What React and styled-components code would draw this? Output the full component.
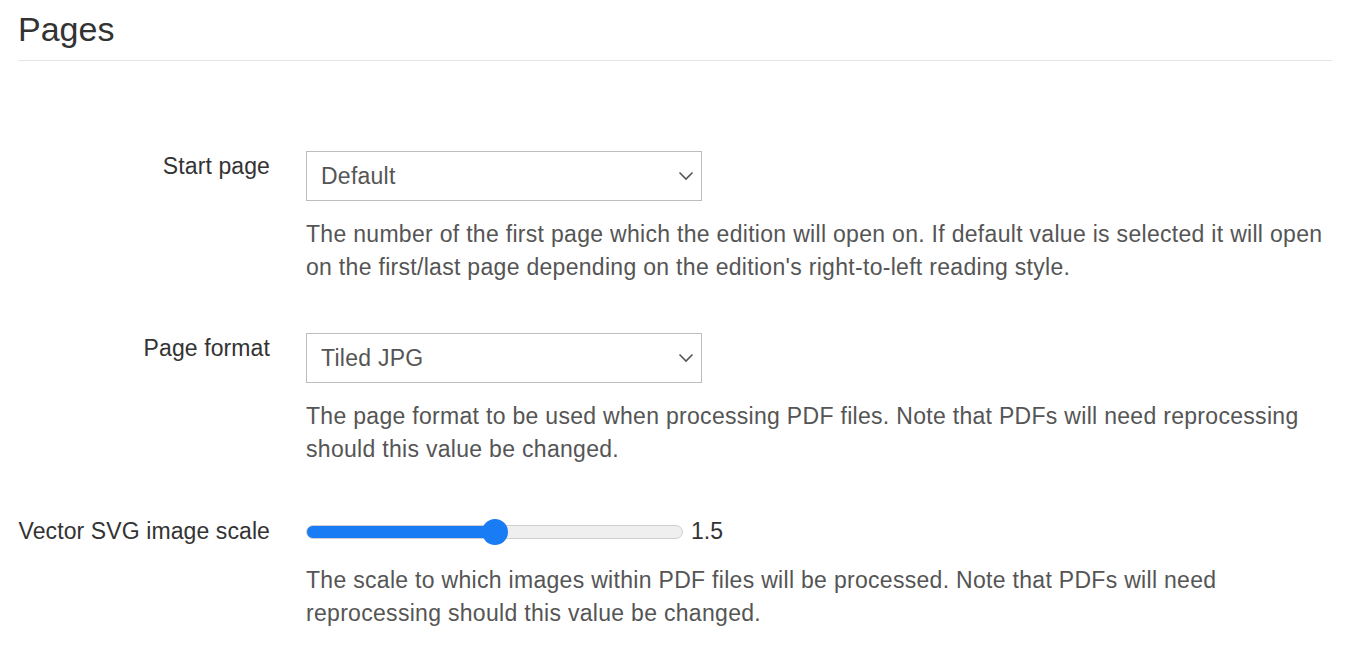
import React, { useState } from "react";
import styled, { createGlobalStyle } from "styled-components";

const GlobalStyle = createGlobalStyle`
  body {
    margin: 0;
    background: #fff;
    font-family: "Liberation Sans", Arial, Helvetica, sans-serif;
  }
`;

const Page = styled.div`
  padding: 0 24px 0 18px;
`;

const Title = styled.h2`
  margin: 0;
  padding: 10px 0 12px;
  font-size: 34px;
  line-height: 38px;
  font-weight: 400;
  color: #333;
  border-bottom: 1px solid #e5e5e5;
`;

const Form = styled.div`
  padding-top: 90px;
`;

const Row = styled.div`
  display: grid;
  grid-template-columns: 252px 1fr;
  column-gap: 36px;
  margin-top: ${(p) => p.gap || 0}px;
`;

const Label = styled.label`
  font-size: 23px;
  line-height: 33px;
  letter-spacing: 0.1px;
  color: #333;
  text-align: right;
  white-space: nowrap;
  margin-top: ${(p) => p.shift || 0}px;
`;

const Control = styled.div``;

const SelectWrap = styled.div`
  position: relative;
  width: 396px;
`;

const Select = styled.select`
  appearance: none;
  -webkit-appearance: none;
  width: 100%;
  height: 50px;
  box-sizing: border-box;
  border: 1px solid #bdbdbd;
  border-radius: 0;
  background: #fff;
  padding: 0 40px 0 14px;
  font-family: inherit;
  font-size: 23px;
  letter-spacing: 0.25px;
  color: #555;
  outline: none;
`;

const Chevron = styled.svg`
  position: absolute;
  right: 8px;
  top: 20px;
  pointer-events: none;
`;

const Help = styled.p`
  margin: ${(p) => p.top || 17}px 0 0;
  font-size: 23px;
  line-height: 33px;
  letter-spacing: 0.3px;
  color: #555;
`;

const SliderRow = styled.div`
  display: flex;
  align-items: center;
  height: 33px;
  gap: 8px;
`;

const Range = styled.input`
  -webkit-appearance: none;
  appearance: none;
  width: 377px;
  height: 26px;
  margin: 0;
  background: transparent;
  outline: none;

  &::-webkit-slider-runnable-track {
    height: 14px;
    box-sizing: border-box;
    border-radius: 7px;
    border: 1px solid #cfcfcf;
    background: linear-gradient(
      to right,
      #1a7cf5 0,
      #1a7cf5 ${(p) => p.pct}%,
      #efefef ${(p) => p.pct}%,
      #efefef 100%
    );
  }

  &::-webkit-slider-thumb {
    -webkit-appearance: none;
    width: 26px;
    height: 26px;
    border-radius: 50%;
    background: #1a7cf5;
    border: none;
    margin-top: -7px;
  }
`;

const RangeValue = styled.span`
  font-size: 23px;
  color: #333;
`;

const ChevronIcon = () => (
  <Chevron width="16" height="10" viewBox="0 0 16 10">
    <path d="M1.5 1.5 L8 8 L14.5 1.5" fill="none" stroke="#555" strokeWidth="1.6" />
  </Chevron>
);

const SelectField = ({ value, options }) => (
  <SelectWrap>
    <Select defaultValue={value}>
      {options.map((o) => (
        <option key={o}>{o}</option>
      ))}
    </Select>
    <ChevronIcon />
  </SelectWrap>
);

export default function App() {
  const [scale, setScale] = useState(1.5);
  const min = 0.5;
  const max = 2.5;
  const pct = ((scale - min) / (max - min)) * 100;

  return (
    <Page>
      <GlobalStyle />
      <Title>Pages</Title>
      <Form>
        <Row>
          <Label shift={-1}>Start page</Label>
          <Control>
            <SelectField value="Default" options={["Default", "1", "2", "3"]} />
            <Help>
              The number of the first page which the edition will open on. If default value is selected it will open
              on the first/last page depending on the edition's right-to-left reading style.
            </Help>
          </Control>
        </Row>

        <Row gap={49}>
          <Label shift={-1}>Page format</Label>
          <Control>
            <SelectField value="Tiled JPG" options={["Tiled JPG", "JPG", "PNG", "SVG"]} />
            <Help>
              The page format to be used when processing PDF files. Note that PDFs will need reprocessing should this
              value be changed.
            </Help>
          </Control>
        </Row>

        <Row gap={49}>
          <Label>Vector SVG image scale</Label>
          <Control>
            <SliderRow>
              <Range
                type="range"
                min={min}
                max={max}
                step={0.1}
                value={scale}
                pct={pct}
                onChange={(e) => setScale(parseFloat(e.target.value))}
              />
              <RangeValue>{scale.toFixed(1)}</RangeValue>
            </SliderRow>
            <Help top={16}>
              The scale to which images within PDF files will be processed. Note that PDFs will need reprocessing
              should this value be changed.
            </Help>
          </Control>
        </Row>
      </Form>
    </Page>
  );
}
